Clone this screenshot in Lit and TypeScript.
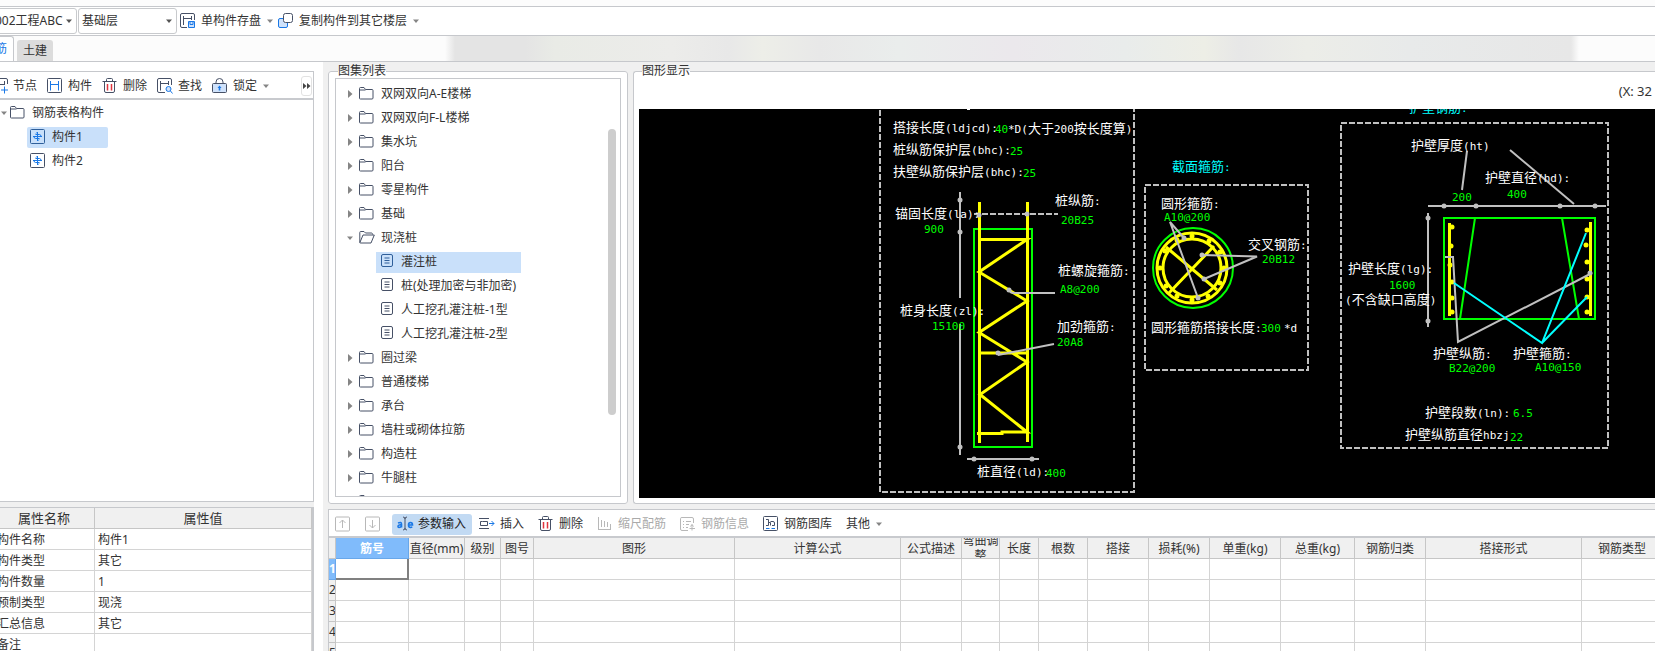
import { LitElement, html, svg, css, nothing } from "lit";
import { customElement, property, state } from "lit/decorators.js";
import { classMap } from "lit/directives/class-map.js";

const icons: Record<string, unknown> = {
  save: svg`<path class="k" d="M7 14.500H2Q.5 14.500 .5 13V2Q.5 .5 2 .5H13Q14.500 .5 14.500 2V7M3.500 3V12M3.500 5.500H11.500M11.500 3V7"/><path class="b" fill="#cfe2fb" d="M8.500 8.500h6v6h-6z"/><path class="b" d="M10 9v2.500h3V9"/>`,
  copy: svg`<rect class="b" fill="#cfe2fb" x=".5" y="5.500" width="9" height="9" rx="1.500"/><rect class="k" x="5.500" y=".5" width="9" height="9" rx="2" style="fill:#fff"/>`,
  node: svg`<path class="k" d="M8 15.500H2Q.5 15.500 .5 14V2Q.5 .5 2 .5H14Q15.500 .5 15.500 2V6M3.500 3V13M3.500 6.500H12.500M12.500 3V7"/><path class="b" d="M12.500 8.500v7M9 12h7"/>`,
  part: svg`<rect class="k" x=".5" y=".5" width="14" height="14" rx="1"/><path class="b" d="M3.500 3v9.500M11.500 3v9.500M3.500 6.500h8"/>`,
  del: svg`<path class="k" d="M.5 3.500h14M4.500 3.500V1.500Q4.500 .5 5.500 .5h4Q10.500 .5 10.500 1.500v2M2.500 3.500V13Q2.500 14.500 4 14.500h7Q12.500 14.500 12.500 13V3.500"/><path class="r" d="M5.500 6v6.500M9.500 6v6.500"/>`,
  find: svg`<path class="k" d="M8 14.500H2Q.5 14.500 .5 13V2Q.5 .5 2 .5H13Q14.500 .5 14.500 2V7M3.500 3V12.500M3.500 5.500H11.500M11.500 3V7"/><circle class="b" fill="#cfe2fb" cx="11.500" cy="11" r="2.500"/><path class="b" d="M13.500 13l2 2.500"/>`,
  lock: svg`<path class="k" d="M4 6V4Q4 .5 7.500 .5T11 4V6"/><rect class="k" x=".5" y="5.500" width="14" height="9" rx="1" style="fill:#cfe2fb"/><path class="bf" d="M7.500 7.500l2 2.500H8.300v2.500H6.700V10H5.500z"/>`,
  folder: svg`<path class="k" d="M.5 12.500V2.500Q.5 1.500 1.500 1.500H5L6.500 3.500H13Q14 3.500 14 4.500V12Q14 13 13 13H1.500Q.5 13 .5 12.500zM.5 4h6"/>`,
  open: svg`<path class="k" d="M.8 12.500V2.500Q.8 1.500 1.500 1.500H5L6.500 3H12.500Q13.500 3 13.500 4.500M.8 12.800L4 5H15.300L12 13H1.500z"/>`,
  doc: svg`<rect class="k" x="1.500" y=".5" width="11" height="12" rx="1.500"/><path class="k" d="M4.500 4h5M4.500 6.500h5M4.500 9h5"/>`,
  comp: svg`<rect class="k" x=".5" y=".5" width="14" height="14" rx="1"/><path class="b" d="M7.500 3V12M3 7.500h9M5.500 5.500h4q1.500 0 1.500 2M9.500 9.500h-4q-1.500 0-1.500-2M6 4.500L7.500 3M9 10.500L7.500 12"/>`,
  up: svg`<rect class="k" x=".5" y="1" width="14" height="14" rx="1"/><path class="k" d="M7.500 12V4M4.500 7l3-3 3 3"/>`,
  down: svg`<rect class="k" x=".5" y="1" width="14" height="14" rx="1"/><path class="k" d="M7.500 4v8M4.500 9l3 3 3-3"/>`,
  caretText: svg`<path class="b2" d="M1 7Q4.500 5.500 4.500 8v3.500M4.500 9Q1 8.500 1 10.500T4.500 10.500M11.500 9h4Q15.500 6.500 13.500 6.500T11.500 9T13.500 11.500L15.300 11"/><path class="k" d="M6 1q2 0 2 2v9q0 2-2 2M10 1Q8 1 8 3M8 12q0 2 2 2"/>`,
  insert: svg`<path class="k" d="M0 2.500h10M0 12.500h10M3.500 5.500h-2v4h7v-4h-5"/><path class="b" d="M10 7.500h5M12.500 5l2.500 2.500-2.500 2.500"/>`,
  scale: svg`<path class="k" d="M1.500 1v13M4.500 4v7M7.500 5v6M10.500 6v5M13.500 8v5M1 13.500h13"/>`,
  info: svg`<path class="k" d="M8 14.500H2Q.5 14.500 .5 13V2.500Q.5 1.500 2 1.500H12Q13.500 1.500 13.500 3V7M3 5.500h1M6 5.500h5M3 8.500h1M6 8.500h3M3 11.500h1M6 11.500h2M12 8.500v6M9.500 12.500h5.500M10.500 10.500l1.500-2 1.500 2"/>`,
  gallery: svg`<rect class="k" x=".5" y=".5" width="14" height="14" rx="1"/><path class="k" d="M3 3.500h2.500M5.500 3.500v6H3M5.500 6.500h2M7.500 6.500v3M7.500 5.500h2.500q1.500 0 1.500 1.500v2.500H9"/><path class="b" d="M3 12.500h3.500M8.500 12.500H12"/>`,
};

const iconCss = css`
  .ico { flex: none; display: block; width: 16px; height: 16px; overflow: visible; }
  .ico .k { fill: none; stroke: var(--ink, #465066); }
  .ico .b { stroke: #1a78e6; }
  .ico .b:not([fill]) { fill: none; }
  .ico .b2 { fill: none; stroke: #1a78e6; stroke-width: 1.6; }
  .ico .bf { fill: #1a78e6; }
  .ico .r { fill: none; stroke: #e0343f; stroke-width: 1.5; }
  .tri { flex: none; display: block; width: 8px; height: 8px; fill: #858585; }
`;

const baseCss = css`
  * { box-sizing: border-box; }
  :host { font: 12px/18px "Noto Sans", "Noto Sans CJK SC", sans-serif; color: #333; }
  button, select { font: inherit; color: inherit; background: none; border: 0; padding: 0; margin: 0; }
  button { white-space: nowrap; text-align: left; }
`;

const icon = (name: string) => html`<svg class="ico" viewBox="0 0 16 16" aria-hidden="true">${icons[name]}</svg>`;
const triDown = html`<svg class="tri" viewBox="0 0 8 8" aria-hidden="true"><path d="M1 2.500h6L4 6z"/></svg>`;
const triRight = html`<svg class="tri" viewBox="0 0 8 8" aria-hidden="true"><path d="M2 0l4.500 4L2 8z"/></svg>`;

type Ink = "w" | "g" | "c";
type Label = [number, number, Ink, string];

const labels: Label[] = [
  [893, 132, "w", "搭接长度(ldjcd):"], [995, 133, "g", "40"], [1008, 133, "w", "*D(大于200按长度算)"],
  [893, 154, "w", "桩纵筋保护层(bhc):"], [1010, 155, "g", "25"],
  [893, 176, "w", "扶壁纵筋保护层(bhc):"], [1023, 177, "g", "25"],
  [1055, 205, "w", "桩纵筋:"], [1061, 224, "g", "20B25"],
  [895, 218, "w", "锚固长度(la):"], [924, 233, "g", "900"],
  [1058, 275, "w", "桩螺旋箍筋:"], [1060, 293, "g", "A8@200"],
  [900, 315, "w", "桩身长度(zl):"], [932, 330, "g", "15100"],
  [1057, 331, "w", "加劲箍筋:"], [1057, 346, "g", "20A8"],
  [977, 476, "w", "桩直径(ld):"], [1046, 477, "g", "400"],
  [1172, 171, "c", "截面箍筋:"],
  [1161, 208, "w", "圆形箍筋:"], [1164, 221, "g", "A10@200"],
  [1248, 249, "w", "交叉钢筋:"], [1262, 263, "g", "20B12"],
  [1151, 332, "w", "圆形箍筋搭接长度:"], [1261, 332, "g", "300"], [1284, 332, "w", "*d"],
  [1409, 112, "c", "护壁钢筋:"],
  [1411, 150, "w", "护壁厚度(ht)"], [1485, 182, "w", "护壁直径(hd):"],
  [1452, 201, "g", "200"], [1507, 198, "g", "400"],
  [1348, 273, "w", "护壁长度(lg):"], [1389, 289, "g", "1600"], [1345, 304, "w", "(不含缺口高度)"],
  [1433, 358, "w", "护壁纵筋:"], [1449, 372, "g", "B22@200"],
  [1513, 358, "w", "护壁箍筋:"], [1535, 371, "g", "A10@150"],
  [1425, 417, "w", "护壁段数(ln):"], [1513, 417, "g", "6.5"],
  [1405, 439, "w", "护壁纵筋直径hbzj"], [1510, 441, "g", "22"],
];

const runs = (s: string) => s.match(/[\u4e00-\u9fff]+|[^\u4e00-\u9fff]+/g) ?? [];
const dot = (x: number, y: number) => svg`<circle cx=${x} cy=${y} r="2.500"/>`;

@customElement("pile-drawing")
class PileDrawing extends LitElement {
  static styles = css`
    :host { display: block; background: #000; overflow: hidden; }
    svg { display: block; width: 100%; height: 100%; }
    .gray { stroke: #c0c0c0; fill: none; stroke-width: 2; }
    .dash { stroke-dasharray: 6 2; }
    .mark { fill: #c0c0c0; }
    .green { stroke: #0f0; fill: none; stroke-width: 2; }
    .yellow { stroke: #ff0; fill: none; stroke-width: 3; }
    .knot { fill: #ff0; }
    .cyan { stroke: #0ff; fill: none; stroke-width: 2; }
    text { font: 13px "Noto Sans CJK SC", sans-serif; white-space: pre; }
    .lat { font: 11px "DejaVu Sans Mono", monospace; }
    .w { fill: #fff; } .g { fill: #0f0; } .c { fill: #0ff; }
  `;
  render() {
    return html`<svg role="img" aria-label="灌注桩"><g transform="translate(-639 -109)">
      <g class="w">${svg`<rect x="967" y="109" width="3" height="1"/>`}</g>
      <path class="gray dash" d="M880 102V492H1134V102M1145 185H1308V370H1145zM1341 123H1608V448H1341z"/>
      <path class="green" d="M974 229H1032V447H974z"/>
      <path class="yellow" d="M979.500 202V443M1027.500 202V442M979 239.500H1027L979 272L1027 301L979 332.500L1027 362L980 394.500L1027 432H1002V433.500H977M979 353H1027"/>
      <path class="gray" d="M960 192V298M960 324V455M967 459H1039M1010 292L1013 293H1055M1054 344L998 355"/>
      <path class="gray dash" d="M974 214H1058"/>
      <g class="mark">${[[960, 200], [960, 232], [960, 447], [974, 459], [1032, 459], [979, 215], [1027, 214], [1009, 290], [998, 353]].map(([x, y]) => dot(x, y))}</g>
      <circle class="green" cx="1193" cy="268" r="40"/>
      <circle class="yellow" cx="1192" cy="268" r="35"/>
      <circle class="yellow" cx="1192" cy="268" r="29"/>
      <g class="knot">${[0, 28, 60, 90, 118, 145, 180, 212, 242, 270, 302, 330].map((a) => dot(Math.round(1192 + 32 * Math.cos((a * Math.PI) / 180)), Math.round(268 + 32 * Math.sin((a * Math.PI) / 180))))}</g>
      <path class="yellow" d="M1166 247L1217 290M1214 246L1168 294"/>
      <path class="gray" d="M1184 238L1170 222L1198 298M1202 255L1257 256.500L1204 279"/>
      <g class="mark">${[[1184, 238], [1198, 298], [1202, 255], [1204, 279]].map(([x, y]) => dot(x, y))}</g>
      <path class="green" d="M1444 218H1595V319H1444zM1475 218L1460 319M1562 218L1579 319"/>
      <path class="yellow" d="M1449.500 223V316M1590.500 222V316"/>
      <g class="knot">${[[1452, 227], [1451, 246], [1450, 265], [1452, 282], [1452, 298], [1452, 312], [1587, 230], [1586, 245], [1587, 262], [1587, 279], [1587, 297], [1587, 312]].map(([x, y]) => dot(x, y))}</g>
      <path class="gray" d="M1467 151L1462 190M1510 150L1574 204M1428 206H1606M1428 213V327M1445 257H1453L1458 342L1592 273"/>
      <g class="mark">${[[1444, 206], [1476, 206], [1560, 206], [1595, 206], [1428, 218], [1428, 321], [1590, 273]].map(([x, y]) => dot(x, y))}</g>
      <path class="cyan" d="M1454 283L1542 343L1586 233M1587 297L1542 343"/>
      ${labels.map(([x, y, ink, s]) => svg`<text class=${ink} x=${x} y=${y}>${runs(s).map((r) => svg`<tspan class=${/[\u4e00-\u9fff]/.test(r) ? "han" : "lat"}>${r}</tspan>`)}</text>`)}
    </g></svg>`;
  }
}

@customElement("tool-button")
class ToolButton extends LitElement {
  @property() icon = "";
  @property() label = "";
  @property({ type: Boolean }) menu = false;
  @property({ type: Boolean }) bare = false;
  @property({ type: Boolean }) off = false;
  @property({ type: Boolean, reflect: true }) active = false;
  static styles = [baseCss, iconCss, css`
    :host { display: block; flex: none; }
    button { display: flex; align-items: center; gap: 5px; height: 21px; }
    button:disabled { color: #aaa; --ink: #b8b8b8; }
    :host([active]) button { background: #c2daf3; border-radius: 3px; padding: 0 6px 0 5px; color: #222; }
  `];
  render() {
    return html`<button type="button" ?disabled=${this.off} aria-label=${this.label}>
      ${this.icon ? icon(this.icon) : nothing}${this.bare ? nothing : html`<span>${this.label}</span>`}${this.menu ? triDown : nothing}
    </button>`;
  }
}

type Branch = { name: string; open?: boolean; kids?: string[] };
const atlas: Branch[] = [
  { name: "双网双向A-E楼梯" }, { name: "双网双向F-L楼梯" }, { name: "集水坑" }, { name: "阳台" },
  { name: "零星构件" }, { name: "基础" },
  { name: "现浇桩", open: true, kids: ["灌注桩", "桩(处理加密与非加密)", "人工挖孔灌注桩-1型", "人工挖孔灌注桩-2型"] },
  { name: "圈过梁" }, { name: "普通楼梯" }, { name: "承台" }, { name: "墙柱或砌体拉筋" },
  { name: "构造柱" }, { name: "牛腿柱" }, { name: "" },
];

const columns: [string, number][] = [
  ["筋号", 73], ["直径(mm)", 56], ["级别", 36], ["图号", 33], ["图形", 201], ["计算公式", 166],
  ["公式描述", 61], ["弯曲调整", 38], ["长度", 39], ["根数", 49], ["搭接", 61], ["损耗(%)", 61],
  ["单重(kg)", 71], ["总重(kg)", 74], ["钢筋归类", 71], ["搭接形式", 156], ["钢筋类型", 81],
];

const props = [["构件名称", "构件1"], ["构件类型", "其它"], ["构件数量", "1"], ["预制类型", "现浇"], ["汇总信息", "其它"], ["备注", ""]];

@customElement("app-root")
class AppRoot extends LitElement {
  @state() part = "构件1";
  @state() shape = "灌注桩";

  static styles = [baseCss, iconCss, css`
    :host { display: flex; flex-direction: column; height: 100vh; overflow: hidden; background: #fff; }
    .strip { flex: none; height: 6px; background: #fcfcfc; }
    .top { flex: none; display: flex; align-items: center; height: 30px; border: solid #c6c8cc; border-width: 1px 0; }
    .combo { display: grid; align-items: center; margin-right: 1px; }
    .combo > * { grid-area: 1 / 1; }
    .combo select { appearance: none; width: 100%; height: 26px; border: 1px solid #c8cacd; border-radius: 3px; padding: 0 8px 0 3px; }
    .combo .tri { justify-self: end; margin-right: 4px; pointer-events: none; fill: #555; }
    .project { width: 86px; margin-left: -9px; }
    .floor { width: 99px; }
    .top tool-button { margin-left: 2px; }
    .top tool-button + tool-button { margin-left: 4px; }
    .tabs { flex: none; display: flex; align-items: flex-end; height: 26px; border-bottom: 1px solid #c6c8cc; background: #fcfcfc; }
    .tab { height: 21px; width: 36px; text-align: center; border-radius: 3px 3px 0 0; background: #dcdcdc; }
    .tab.on { width: 42px; height: 25px; margin: 0 3px 0 -28px; padding-right: 6px; text-align: right; background: #fff; border: solid #c6c8cc; border-width: 1px 1px 0; color: #1a78e6; }
    .haze { flex: 1; align-self: stretch; margin: 0 76px 0 392px; background: linear-gradient(90deg, #fcfcfc, #e4e4e4 10px, #e4e4e4 80px, #e9ebe6 110px, #ececea 20%, #e8e8e8 25%, #edeee8 28%, #e8e8e8 33%, #eaedec 40%, #ebe8ec 50%, #e9eceb 60%, #edeee6 67%, #e7e7e7 70%, #ecede8 76%, #e8eaea 85%, #e7e7e7 calc(100% - 8px), #fcfcfc); }
    .main { flex: 1; min-height: 0; display: flex; background: #f0f0f0; }
    .left { flex: none; width: 323px; display: flex; flex-direction: column; background: #fff; overflow: hidden; }
    .parts { flex: 1; min-height: 0; margin: 9px 9px 0 -9px; border: 1px solid #c6c8cc; }
    .bar { display: flex; align-items: center; gap: 10px; padding-top: 2px; }
    .parts .bar { height: 28px; border-bottom: 2px solid #c8cace; padding-right: 1px; }
    .more { margin-left: auto; display: flex; align-items: center; justify-content: center; width: 11px; height: 20px; border: 1px solid #e2e2e2; border-radius: 3px; }
    .more svg { flex: none; width: 8px; height: 6px; fill: #444; }
    ul { list-style: none; margin: 0; padding: 0; }
    .tree { padding-top: 1px; }
    .row { display: flex; align-items: center; height: 24px; }
    .row .tri { margin-right: 2px; }
    .row .tri + .ico { margin-right: 6px; }
    .root { padding-left: 8px; }
    .leaf { display: flex; align-items: center; height: 21px; gap: 6px; padding: 0 17px 0 3px; border-radius: 2px; }
    .leaf.sel { background: #c9e0fa; --ink: #2f5f9a; }
    .kids .row { padding-left: 35px; }
    .kids .leaf { width: 81px; }
    .divide { flex: none; height: 5px; width: 314px; background: #f0f0f0; }
    .attrs { flex: none; height: 144px; margin: 0 9px 0 -6px; border: solid #c6c8cc; border-width: 1px 2px 0 0; overflow: hidden; }
    table { border-collapse: separate; border-spacing: 0; table-layout: fixed; }
    .attrs table { width: 100%; }
    .attrs .name { width: 101px; }
    .attrs th { height: 21px; padding: 0; background: #f0f0f0; font-weight: 400; font-size: 13px; border: solid #c6c6c6; border-width: 0 1px 1px 0; }
    .attrs td { height: 21px; padding: 2px 3px 0; border: solid #d4d4d4; border-width: 0 1px 1px 0; }
    .right { flex: 1; min-width: 0; margin-left: 5px; display: flex; flex-direction: column; }
    .upper { flex: 1; min-height: 0; display: flex; gap: 5px; margin-bottom: 5px; }
    fieldset { min-width: 0; margin: 0; padding: 0; border: 1px solid #c6c8cc; border-radius: 3px; background: #fff; display: flex; flex-direction: column; }
    legend { padding: 0; margin-left: 3px; line-height: 18px; height: 18px; }
    .atlas { flex: none; width: 300px; padding: 0 6px 6px; }
    .box { flex: 1; min-height: 0; display: flex; margin-top: -2px; border: 1px solid #c6c8cc; padding: 3px 4px 0 10px; overflow: hidden; }
    .list { flex: 1; }
    .list .tri { margin-right: 5px; }
    .sub .row { padding-left: 30px; }
    .sub .leaf { gap: 5px; padding-left: 4px; width: 145px; border-radius: 0; }
    .thumb { flex: none; width: 8px; height: 286px; margin-top: 47px; border-radius: 4px; background: #cdcdcd; }
    .view { flex: 1; padding: 0 0 5px 5px; border-right: 0; border-radius: 3px 0 0 3px; }
    .xy { flex: none; height: 29px; padding: 2px 3px 0 0; font-size: 13px; text-align: right; }
    .view pile-drawing { flex: 1; min-height: 0; }
    .lower { flex: none; height: 142px; border: solid #c6c8cc; border-width: 1px 0 0 1px; background: #fff; overflow: hidden; }
    .lower .bar { height: 28px; gap: 14px; padding-left: 6px; border-bottom: 2px solid #c8cace; }
    .lower .bar tool-button[active] { margin: 0 -7px 0 -3px; }
    .grid { width: 0; }
    .grid th, .grid td { padding: 0; height: 21px; font-weight: 400; border: solid #d4d4d4; border-width: 0 1px 1px 0; overflow: hidden; }
    .grid th { background: #f0f0f0; border-color: #c6c6c6; }
    .grid .num { width: 7px; }
    .grid tbody th { white-space: nowrap; text-align: left; }
    .grid .cap { display: flex; align-items: center; justify-content: center; height: 20px; line-height: 15px; overflow: hidden; text-align: center; }
    .grid th.hot { background: #80bbfb; border-color: #68a7ea; color: #fff; font-weight: 700; }
    .grid td.cur { border: solid #808080; border-width: 0 2px 2px 0; }
  `];

  leaf(name: string, ico: string, current: string, pick: (n: string) => void) {
    return html`<li class="row"><button type="button" class=${classMap({ leaf: true, sel: name === current })} @click=${() => pick(name)}>${icon(ico)}<span>${name}</span></button></li>`;
  }

  render() {
    return html`
      <div class="strip"></div>
      <header class="top">
        <span class="combo project"><select aria-label="工程"><option>002工程ABC</option></select>${triDown}</span>
        <span class="combo floor"><select aria-label="楼层"><option>基础层</option></select>${triDown}</span>
        <tool-button icon="save" label="单构件存盘" menu></tool-button>
        <tool-button icon="copy" label="复制构件到其它楼层" menu></tool-button>
      </header>
      <nav class="tabs">
        <button type="button" class="tab on">钢筋</button><button type="button" class="tab">土建</button>
        <div class="haze"></div>
      </nav>
      <main class="main">
        <section class="left">
          <div class="parts">
            <div class="bar">
              <tool-button icon="node" label="节点"></tool-button>
              <tool-button icon="part" label="构件"></tool-button>
              <tool-button icon="del" label="删除"></tool-button>
              <tool-button icon="find" label="查找"></tool-button>
              <tool-button icon="lock" label="锁定" menu></tool-button>
              <button type="button" class="more" aria-label="更多"><svg viewBox="0 0 8 6"><path d="M0 0l3.500 3L0 6zM4 0l3.500 3L4 6z"/></svg></button>
            </div>
            <ul class="tree">
              <li><div class="row root">${triDown}${icon("folder")}<span>钢筋表格构件</span></div>
                <ul class="kids">${["构件1", "构件2"].map((n) => this.leaf(n, "comp", this.part, (v) => (this.part = v)))}</ul>
              </li>
            </ul>
          </div>
          <div class="divide"></div>
          <div class="attrs"><table>
            <thead><tr><th class="name">属性名称</th><th>属性值</th></tr></thead>
            <tbody>${props.map(([k, v]) => html`<tr><td>${k}</td><td>${v}</td></tr>`)}</tbody>
          </table></div>
        </section>
        <section class="right">
          <div class="upper">
            <fieldset class="atlas"><legend>图集列表</legend>
              <div class="box">
                <ul class="list">${atlas.map((n) => html`<li><div class="row">${n.open ? triDown : triRight}${icon(n.open ? "open" : "folder")}<span>${n.name}</span></div>
                  ${n.kids ? html`<ul class="sub">${n.kids.map((k) => this.leaf(k, "doc", this.shape, (v) => (this.shape = v)))}</ul>` : nothing}</li>`)}</ul>
                <div class="thumb"></div>
              </div>
            </fieldset>
            <fieldset class="view"><legend>图形显示</legend>
              <div class="xy">(X: 32</div>
              <pile-drawing></pile-drawing>
            </fieldset>
          </div>
          <div class="lower">
            <div class="bar">
              <tool-button icon="up" label="上移" bare off></tool-button>
              <tool-button icon="down" label="下移" bare off></tool-button>
              <tool-button icon="caretText" label="参数输入" active></tool-button>
              <tool-button icon="insert" label="插入"></tool-button>
              <tool-button icon="del" label="删除"></tool-button>
              <tool-button icon="scale" label="缩尺配筋" off></tool-button>
              <tool-button icon="info" label="钢筋信息" off></tool-button>
              <tool-button icon="gallery" label="钢筋图库"></tool-button>
              <tool-button label="其他" menu></tool-button>
            </div>
            <table class="grid">
              <colgroup><col class="num">${columns.map(([, w]) => html`<col style="width:${w}px">`)}</colgroup>
              <thead><tr><th></th>${columns.map(([c], i) => html`<th class=${classMap({ hot: i === 0 })}><div class="cap">${c}</div></th>`)}</tr></thead>
              <tbody>${[1, 2, 3, 4, 5].map((r) => html`<tr><th class=${classMap({ hot: r === 1 })}>${r}</th>${columns.map((_, i) => html`<td class=${classMap({ cur: r === 1 && i === 0 })}></td>`)}</tr>`)}</tbody>
            </table>
          </div>
        </section>
      </main>`;
  }
}
